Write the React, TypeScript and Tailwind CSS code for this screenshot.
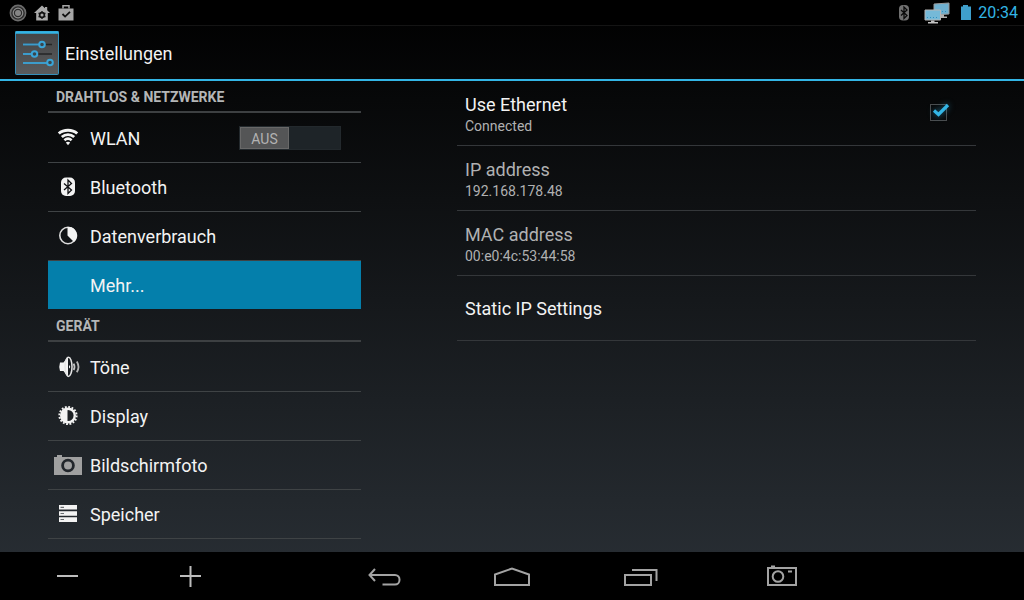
import { useState } from "react"
import type { ReactNode } from "react"

function WifiIcon() {
  return (
    <svg width="28" height="28" viewBox="0 0 28 28" fill="none" stroke="#f3f3f3">
      <path d="M4.800 9.500C9.600 5.200 18.400 5.200 23.200 9.500" strokeWidth="3" />
      <path d="M7.800 13C11.400 9.800 16.600 9.800 20.200 13" strokeWidth="2.8" />
      <path d="M10.400 16.200C12.600 14.200 15.400 14.200 17.600 16.200" strokeWidth="2.6" />
      <path d="M11.800 18.500c1.300-1 3.100-1 4.400 0L14 21.200z" fill="#f3f3f3" stroke="none" />
    </svg>
  )
}

function BluetoothIcon() {
  return (
    <svg width="28" height="28" viewBox="0 0 28 28" fill="none">
      <rect x="7" y="4.5" width="14" height="18.5" rx="5" fill="#f3f3f3" />
      <path d="M10 10.500l7.500 6.500-3.500 3.500V7l3.500 3.500L10 17" stroke="#101114" strokeWidth="1.3" />
    </svg>
  )
}

function DataUsageIcon() {
  return (
    <svg width="28" height="28" viewBox="0 0 28 28" fill="none">
      <circle cx="14" cy="13.5" r="8.200" stroke="#dcdcdc" strokeWidth="1.6" />
      <path d="M13.500 13.500V5A8.500 8.500 0 0 1 20 20z" fill="#f3f3f3" />
    </svg>
  )
}

function SoundIcon() {
  return (
    <svg width="28" height="28" viewBox="0 0 28 28" fill="none">
      <path d="M6 9.500h3.500L14 3.500v20.500L9.500 18H6q-1.500-4 0-8.500z" fill="#f3f3f3" />
      <ellipse cx="14.5" cy="13.800" rx="3.500" ry="9.600" stroke="#e4e4e4" strokeWidth="1.500" />
      <path d="M15 12q2.400 1.800 0 3.600z" fill="#f3f3f3" />
      <path d="M19.600 10.600q1.800 3.200 0 6.400" stroke="#c4c4c4" strokeWidth="1.800" />
      <path d="M22.800 8.400q3.400 5.400 0 10.800" stroke="#b4b4b4" strokeWidth="1.800" />
    </svg>
  )
}

function DisplayIcon() {
  return (
    <svg width="28" height="28" viewBox="0 0 28 28" fill="none">
      <circle cx="14" cy="13.5" r="8.600" stroke="#f3f3f3" strokeWidth="2" strokeDasharray="1.8 1.577" />
      <circle cx="14" cy="13.5" r="6.800" stroke="#f3f3f3" strokeWidth="2.400" />
      <path d="M13.500 7a6.500 6.500 0 0 0 0 13z" fill="#f3f3f3" />
    </svg>
  )
}

function CameraIcon() {
  return (
    <svg width="28" height="28" viewBox="0 0 28 28" fill="none">
      <path d="M0 6h3V4h5v2h20v18H0z" fill="#a0a0a0" />
      <circle cx="14" cy="14.500" r="5.400" stroke="#22262b" strokeWidth="2.800" />
    </svg>
  )
}

function StorageIcon() {
  return (
    <svg width="28" height="28" viewBox="0 0 28 28">
      <path d="M5 5h18v4.600H5zM5 11.300h18v4.400H5zM5 17.300h18v4.600H5z" fill="#f3f3f3" />
      <path d="M6.500 7.400h3.500M6.500 13.500h3.500M6.500 19.500h3.500" stroke="#6a6e72" strokeWidth="1.200" />
    </svg>
  )
}

function SettingsLogo() {
  return (
    <svg width="44" height="44" viewBox="0 0 44 44" fill="none">
      <defs>
        <linearGradient id="tile" x1="0" y1="0" x2="0" y2="1">
          <stop offset="0" stopColor="#434445" />
          <stop offset="1" stopColor="#5a5c5e" />
        </linearGradient>
      </defs>
      <rect x="0.5" y="0.5" width="43" height="43" rx="1" fill="url(#tile)" stroke="#3590bb" />
      <path d="M0.500 1.500h43" stroke="#33b5e5" strokeWidth="2.500" />
      <path d="M8 13.500h29M8 23h29M8 32h29" stroke="#242526" strokeWidth="1.500" />
      <path d="M8 13.500h17M8 23h8M8 32h24" stroke="#3c9ccb" strokeWidth="2" />
      <g fill="#39464d" stroke="#3aa5d8" strokeWidth="2">
        <circle cx="27" cy="13.500" r="2.800" />
        <circle cx="19.500" cy="23" r="2.800" />
        <circle cx="35" cy="31.500" r="2.800" />
      </g>
    </svg>
  )
}

function StatusBar() {
  return (
    <header className="flex h-[25px] shrink-0 items-center justify-between bg-black pr-[6px] pl-[9px]">
      <div className="flex items-center gap-[6px]">
        <svg width="18" height="18" viewBox="0 0 18 18" fill="none">
          <circle cx="9" cy="9" r="7.600" fill="#2c2c2c" stroke="#6c6c6c" strokeWidth="1.600" />
          <circle cx="9" cy="9" r="4.800" stroke="#8c8c8c" strokeWidth="1.200" />
          <circle cx="9" cy="9" r="3" fill="#858585" />
        </svg>
        <svg width="18" height="18" viewBox="0 0 18 18">
          <path d="M9 1.500l3 2.700V3h2.200v3.200L17 9h-2.200v7.500H3.200V9H1z" fill="#aaa" />
          <circle cx="9" cy="11" r="2.400" fill="none" stroke="#111" strokeWidth="1.700" />
          <path d="M9 7v1.500M9 13.500V15M5.500 9l1.400.8M11.100 12.200l1.400.8M12.500 9l-1.400.8M6.900 12.200l-1.400.8" stroke="#111" strokeWidth="1.300" />
        </svg>
        <svg width="18" height="18" viewBox="0 0 18 18" fill="none">
          <path d="M1.500 4.500h15v12h-15z" fill="#a6a6a6" />
          <path d="M6 4.500V1.800h6v2.700" stroke="#a6a6a6" strokeWidth="1.500" />
          <path d="M5.500 10l2.600 2.600L13 7.800" stroke="#111" strokeWidth="1.800" />
        </svg>
      </div>
      <div className="flex items-center">
        <svg className="mr-[10px]" width="18" height="18" viewBox="0 0 18 18" fill="none">
          <rect x="4" y="1" width="10" height="15.500" rx="4" fill="#707070" />
          <path d="M6 6l6 5.500-3 3V3l3 3-6 5.500" stroke="#0a0a0a" strokeWidth="1.300" />
        </svg>
        <svg className="mr-[9px]" width="28" height="22" viewBox="0 0 28 22">
          <path d="M11 2l15-1v11l-15 1z" fill="#6fb0cf" stroke="#9a9a9a" />
          <path d="M18 12.500h3v2h3v1.500h-8" fill="#b0b0b0" />
          <path d="M2 8h15.500v10H2z" fill="#75b9d8" stroke="#b5b5b5" />
          <path d="M8 18.500h3.500v1.500h3.500v1.500H5v-1.500h3z" fill="#c2c2c2" />
          <path d="M4 15.500h12M19 9.500h6" stroke="#2f90c0" strokeDasharray="1 2" />
        </svg>
        <svg className="mr-[6px]" width="12" height="18" viewBox="0 0 12 18">
          <path d="M3 1h5v1.500h3V16H1V2.500h2z" fill="#3f9fcb" />
        </svg>
        <time className="text-base leading-[24px] text-[#33b5e5]">20:34</time>
      </div>
    </header>
  )
}

function SectionHeader({ children }: { children: ReactNode }) {
  return (
    <h2 className="mb-px h-[32px] border-b-2 border-[#3d4042] px-2 text-sm leading-[32px] font-bold text-[#b4b6b7]">
      {children}
    </h2>
  )
}

type MenuRowProps = {
  label: string
  icon?: ReactNode
  active?: boolean
  children?: ReactNode
}

function MenuRow({ label, icon, active, children }: MenuRowProps) {
  return (
    <li
      className={
        active
          ? "mb-px flex h-[48px] items-center bg-[#047fab]"
          : "flex h-[49px] items-center border-b border-[#3f4345]"
      }
    >
      <a href="#" className="flex h-full flex-1 items-center gap-2 pl-[6px] text-lg text-[#f3f3f3]">
        <span className="w-[28px]">{icon}</span>
        <span className="pt-[2px]">{label}</span>
      </a>
      {children}
    </li>
  )
}

function WlanSwitch() {
  const [on, setOn] = useState(false)

  return (
    <button
      type="button"
      role="switch"
      aria-checked={on}
      aria-label="WLAN"
      onClick={() => setOn(!on)}
      className={
        "mr-5 flex h-[24px] w-[102px] border border-[#23292d] bg-[#1e2428] " +
        (on ? "justify-end" : "justify-start")
      }
    >
      <span className="h-[22px] w-[49px] border border-[#686868] bg-[#545556] text-sm leading-[22px] text-[#b2b2b2]">
        {on ? "AN" : "AUS"}
      </span>
    </button>
  )
}

const rowClass = "flex h-[65px] items-center justify-between border-b border-[#34373a] px-2"

function InfoRow({ title, value }: { title: string; value: string }) {
  return (
    <div className={rowClass}>
      <dl className="pt-1">
        <dt className="text-lg leading-[22px] text-[#b0b1b2]">{title}</dt>
        <dd className="text-sm leading-[20px] text-[#b0b1b2]">{value}</dd>
      </dl>
    </div>
  )
}

function EthernetPanel() {
  const [enabled, setEnabled] = useState(true)

  return (
    <section>
      <label className={rowClass}>
        <span className="pt-1">
          <span className="block text-lg leading-[22px] text-[#f3f3f3]">Use Ethernet</span>
          <span className="block text-sm leading-[20px] text-[#b0b1b2]">Connected</span>
        </span>
        <span className="relative mr-5 h-[18px] w-[18px]">
          <input
            type="checkbox"
            checked={enabled}
            onChange={(e) => setEnabled(e.target.checked)}
            className="block h-[17px] w-[17px] appearance-none border border-[#4a4c4e]"
          />
          {enabled && (
            <svg
              className="pointer-events-none absolute -top-1 left-0 drop-shadow-[0_0_3px_#33b5e588]"
              width="22"
              height="20"
              viewBox="0 0 22 20"
              fill="none"
            >
              <path d="M4 10.500l4.500 4L18 5" stroke="#33b5e5" strokeWidth="3.200" />
            </svg>
          )}
        </span>
      </label>
      <InfoRow title="IP address" value="192.168.178.48" />
      <InfoRow title="MAC address" value="00:e0:4c:53:44:58" />
      <a href="#" className={rowClass}>
        <span className="pt-[2px] text-lg text-[#f3f3f3]">Static IP Settings</span>
      </a>
    </section>
  )
}

function NavButton({ label, className = "", children }: { label: string; className?: string; children: ReactNode }) {
  return (
    <button type="button" aria-label={label} className={"flex h-full items-center justify-center " + className}>
      <svg width="40" height="32" viewBox="0 0 40 32" fill="none" stroke="#a3a3a3" strokeWidth="2">
        {children}
      </svg>
    </button>
  )
}

function NavBar() {
  return (
    <nav className="grid h-[48px] shrink-0 grid-cols-[135fr_111fr_74fr_128fr_128fr_129fr_154fr_165fr] bg-black">
      <NavButton label="Leiser">
        <path d="M9 16h21" stroke="#bcbcbc" />
      </NavButton>
      <NavButton label="Lauter">
        <path d="M9 16h21M19.500 6v21" stroke="#bcbcbc" />
      </NavButton>
      <NavButton label="Zurück" className="col-start-4">
        <path d="M11 9l-5.500 6 5.500 6M5.500 15H31a4.500 4.500 0 0 1 4.500 4.500v0.500a4.500 4.500 0 0 1-4.500 4.500H18.500" />
      </NavButton>
      <NavButton label="Startseite">
        <path d="M3 25V14.500L20 8.500l17 6V25z" />
      </NavButton>
      <NavButton label="Letzte Apps">
        <path d="M4 15h26v10h-26zM11 10h24.500v11" />
      </NavButton>
      <NavButton label="Bildschirmfoto aufnehmen">
        <path d="M6 8h28v17H6z" />
        <path d="M9 6.500h4M26 11.500h4" />
        <circle cx="16" cy="16.500" r="5.300" />
      </NavButton>
    </nav>
  )
}

export default function App() {
  return (
    <div className="flex h-screen flex-col bg-linear-to-b/srgb from-black to-[#2a3036] font-[Roboto,sans-serif]">
      <StatusBar />
      <div className="flex h-[56px] shrink-0 items-center gap-[6px] border-t border-b-2 border-t-[#141414] border-b-[#33b5e5] px-[15px]">
        <SettingsLogo />
        <h1 className="pt-[2px] text-lg text-[#f3f3f3]">Einstellungen</h1>
      </div>
      <main className="grid min-h-0 flex-1 grid-cols-[313fr_519fr] content-start gap-24 overflow-y-auto px-12">
        <div>
          <SectionHeader>DRAHTLOS &amp; NETZWERKE</SectionHeader>
          <ul>
            <MenuRow label="WLAN" icon={<WifiIcon />}>
              <WlanSwitch />
            </MenuRow>
            <MenuRow label="Bluetooth" icon={<BluetoothIcon />} />
            <MenuRow label="Datenverbrauch" icon={<DataUsageIcon />} />
            <MenuRow label="Mehr..." active />
          </ul>
          <SectionHeader>GERÄT</SectionHeader>
          <ul>
            <MenuRow label="Töne" icon={<SoundIcon />} />
            <MenuRow label="Display" icon={<DisplayIcon />} />
            <MenuRow label="Bildschirmfoto" icon={<CameraIcon />} />
            <MenuRow label="Speicher" icon={<StorageIcon />} />
          </ul>
        </div>
        <EthernetPanel />
      </main>
      <NavBar />
    </div>
  )
}
